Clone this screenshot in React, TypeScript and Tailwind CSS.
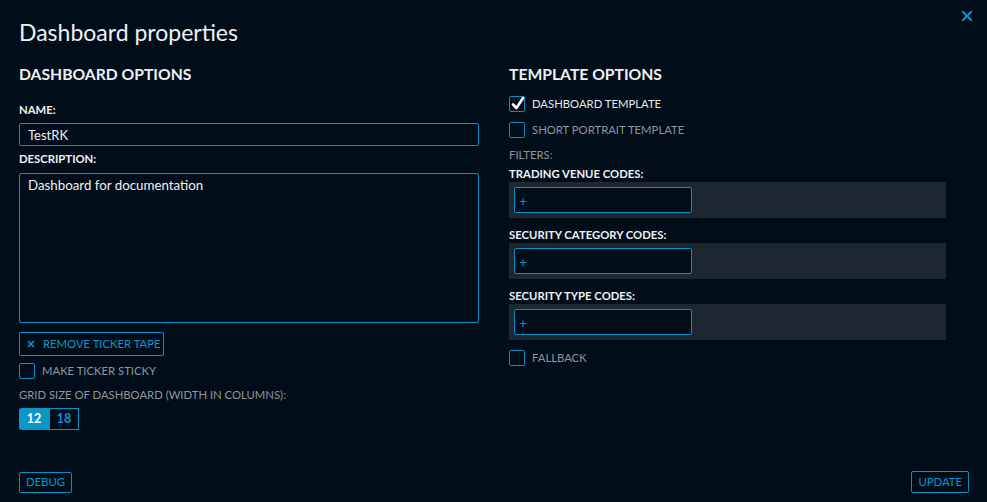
import React from "react"

const font = { fontFamily: "Lato, 'Open Sans', sans-serif" }

function Checkbox({ checked, label, dim }: { checked?: boolean; label: string; dim?: boolean }) {
  return (
    <div className="flex items-center h-[16px]">
      <div className="relative w-[16px] h-[16px] border border-[#0a8fc4] rounded-[2px]">
        {checked && (
          <svg className="absolute left-[1px] top-[-1px]" width="14" height="15" viewBox="0 0 14 15">
            <path d="M2 8.5 L5.5 12 L12 2" fill="none" stroke="#ffffff" strokeWidth="2.6" strokeLinecap="round" strokeLinejoin="round" />
          </svg>
        )}
      </div>
      <span className={`ml-[7px] text-[11.3px] leading-none whitespace-nowrap ${dim ? "text-[#8e979f]" : "text-[#e6eaee]"}`}>{label}</span>
    </div>
  )
}

function CodeBox({ label }: { label: string }) {
  return (
    <>
      <div className="h-[16px] flex items-center text-[11.3px] font-bold text-[#eef1f4]">{label}</div>
      <div className="h-[36px] bg-[#1d2731] p-[5px] pr-0">
        <div className="w-[178px] h-[26px] border border-[#0a8fc4] rounded-[2px] bg-[#010d18] flex items-center pl-[4px] text-[#0a8fc4] text-[14px]">+</div>
      </div>
    </>
  )
}

export default function App() {
  return (
    <div style={font} className="relative w-[987px] h-[502px] bg-[#010d18] flex flex-col px-[19px] pb-[9px] overflow-hidden">
      <button className="absolute right-[14px] top-[10px] text-[#0a95cc]">
        <svg width="12" height="12" viewBox="0 0 12 12">
          <path d="M2 2 L10 10 M10 2 L2 10" stroke="currentColor" strokeWidth="2" strokeLinecap="square" />
        </svg>
      </button>

      <div className="h-[60px] flex items-start pt-[17px]">
        <h1 className="text-[23px] leading-[30px] text-[#eef1f4]">Dashboard properties</h1>
      </div>

      <div className="flex flex-1 gap-[30px]">
        {/* left column */}
        <div className="w-[460px] flex flex-col">
          <div className="h-[30px] flex items-center text-[15.7px] font-bold text-[#eef1f4]">DASHBOARD OPTIONS</div>
          <div className="mt-[12px] h-[16px] flex items-center text-[11.3px] font-bold text-[#eef1f4]">NAME:</div>
          <input
            readOnly
            value="TestRK"
            className="mt-[5px] h-[23px] border border-[#0a8fc4] rounded-[2px] bg-transparent px-[8px] text-[13px] text-[#eef1f4] outline-none"
          />
          <div className="mt-[5px] h-[16px] flex items-center text-[11.3px] font-bold text-[#eef1f4]">DESCRIPTION:</div>
          <textarea
            readOnly
            value="Dashboard for documentation"
            className="mt-[6px] h-[150px] border border-[#0a8fc4] rounded-[2px] bg-transparent px-[8px] py-[2px] text-[13.3px] text-[#eef1f4] outline-none resize-none"
          />
          <button className="mt-[9px] self-start h-[24px] w-[145px] border border-[#0a8fc4] rounded-[2px] flex items-center pl-[7px] text-[11.3px] text-[#0a95cc] whitespace-nowrap">
            <svg width="8" height="8" viewBox="0 0 8 8" className="mr-[8px]">
              <path d="M1 1 L7 7 M7 1 L1 7" stroke="currentColor" strokeWidth="1.6" />
            </svg>
            REMOVE TICKER TAPE
          </button>
          <div className="mt-[7px]">
            <Checkbox label="MAKE TICKER STICKY" dim />
          </div>
          <div className="mt-[8px] h-[16px] flex items-center text-[11.3px] text-[#8e979f]">GRID SIZE OF DASHBOARD (WIDTH IN COLUMNS):</div>
          <div className="mt-[5px] flex h-[22px] self-start text-[12.5px] font-bold">
            <div className="w-[30px] bg-[#0898c8] rounded-l-[3px] flex items-center justify-center text-white">12</div>
            <div className="w-[30px] border border-[#0a8fc4] flex items-center justify-center text-[#0a95cc]">18</div>
          </div>
        </div>

        {/* right column */}
        <div className="w-[437px] flex flex-col">
          <div className="h-[30px] flex items-center text-[15.7px] font-bold text-[#eef1f4]">TEMPLATE OPTIONS</div>
          <div className="mt-[6px]">
            <Checkbox checked label="DASHBOARD TEMPLATE" />
          </div>
          <div className="mt-[10px]">
            <Checkbox label="SHORT PORTRAIT TEMPLATE" dim />
          </div>
          <div className="mt-[9px] h-[16px] flex items-center text-[11.3px] text-[#8e979f]">FILTERS:</div>
          <div className="mt-[3px] flex flex-col">
            <CodeBox label="TRADING VENUE CODES:" />
          </div>
          <div className="mt-[9px] flex flex-col">
            <CodeBox label="SECURITY CATEGORY CODES:" />
          </div>
          <div className="mt-[9px] flex flex-col">
            <CodeBox label="SECURITY TYPE CODES:" />
          </div>
          <div className="mt-[10px]">
            <Checkbox label="FALLBACK" dim />
          </div>
        </div>
      </div>

      <div className="flex justify-between items-end">
        <button className="h-[21px] px-[6px] border border-[#0a8fc4] rounded-[2px] text-[11.3px] text-[#0a95cc]">DEBUG</button>
        <button className="h-[22px] px-[6px] mr-[-1px] border border-[#0a8fc4] rounded-[2px] text-[11.3px] text-[#0a95cc]">UPDATE</button>
      </div>
    </div>
  )
}
